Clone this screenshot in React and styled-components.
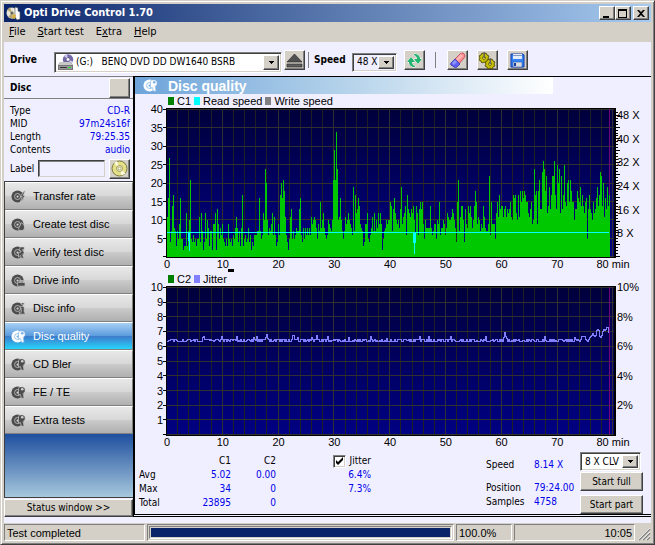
import React, { useState } from 'react';
import styled, { createGlobalStyle, css } from 'styled-components';

const UI_FONT = '"DejaVu Sans Condensed", "DejaVu Sans", sans-serif';
const ARIAL = '"Liberation Sans", Arial, sans-serif';

const GlobalStyle = createGlobalStyle`
  * {
    box-sizing: border-box;
  }

  body {
    margin: 0;
    background: #d4d0c8;
  }

  button, input, select {
    font: inherit;
    color: inherit;
    margin: 0;
  }
`;

const raised = css`
  border: 1px solid;
  border-color: #fff #404040 #404040 #fff;
  box-shadow: inset -1px -1px 0 #808080;
  background: #d4d0c8;
`;

const sunken = css`
  border: 1px solid;
  border-color: #808080 #fff #fff #808080;
`;

const Window = styled.div`
  display: flex;
  flex-direction: column;
  min-height: 100vh;
  border: 1px solid;
  border-color: #d4d0c8 #404040 #404040 #d4d0c8;
  box-shadow: inset 1px 1px 0 #fff, inset -1px -1px 0 #808080;
  padding: 3px;
  background: #d4d0c8;
  font-family: ${UI_FONT};
  font-size: 10px;
  line-height: 14px;
  color: #000;
`;

const TitleBar = styled.header`
  display: flex;
  align-items: center;
  height: 18px;
  padding: 0 2px;
  gap: 3px;
  background: linear-gradient(to right, #0a246a, #a6caf0);
`;

const Title = styled.h1`
  flex: 1;
  margin: 0;
  font-size: 11px;
  font-weight: bold;
  color: #fff;
`;

const WindowButtons = styled.div`
  display: flex;
`;

const WindowButton = styled.button`
  ${raised}
  display: flex;
  align-items: center;
  justify-content: center;
  width: 16px;
  height: 14px;
  padding: 0;
  margin-left: ${props => (props.$apart ? '2px' : 0)};
`;

const MenuBar = styled.nav`
  display: flex;
  align-items: center;
  height: 20px;
  padding: 0 5px;
  gap: 12px;
`;

const MenuItem = styled.button`
  border: 0;
  padding: 0;
  background: none;
  font-size: 11px;
`;

const Client = styled.div`
  flex: 1;
  display: flex;
  flex-direction: column;
  padding-bottom: 6px;
  background: #f0efff;
`;

const Toolbar = styled.div`
  display: flex;
  align-items: center;
  height: 34px;
  padding: 2px 6px 0;
`;

const ToolLabel = styled.label`
  width: ${props => props.$width}px;
  font-weight: bold;
`;

const ToolButton = styled.button`
  ${raised}
  display: flex;
  align-items: center;
  justify-content: center;
  width: 21px;
  height: 20px;
  padding: 0;
  margin-right: ${props => props.$gap || 0}px;
`;

const Separator = styled.span`
  width: 1px;
  height: 16px;
  margin-right: ${props => props.$gap}px;
  background: #808080;
`;

const ComboBox = styled.div`
  display: flex;
  align-items: center;
  width: ${props => props.$width}px;
  height: ${props => props.$height || 19}px;
  margin-top: ${props => props.$top || 0}px;
  margin-right: ${props => props.$gap || 0}px;
  border: 1px solid;
  border-color: #808080 #fff #fff #808080;
  box-shadow: inset 1px 1px 0 #404040, inset -1px -1px 0 #d4d0c8;
  padding: 2px;
  background: ${props => props.$fill || '#fff'};

  select {
    flex: 1;
    min-width: 0;
    appearance: none;
    border: 0;
    padding: 0 0 0 2px;
    background: none;
    line-height: 14px;
  }
`;

const ComboArrow = styled.span`
  ${raised}
  display: flex;
  align-items: center;
  justify-content: center;
  align-self: stretch;
  width: 16px;
  pointer-events: none;
`;

const Body = styled.div`
  flex: 1;
  display: flex;
`;

const Sidebar = styled.aside`
  display: flex;
  flex-direction: column;
  width: 129px;
  border-top: 1px solid #808080;
`;

const DiscHeader = styled.div`
  display: flex;
  align-items: center;
  justify-content: space-between;
  height: 22px;
  padding: 0 3px 0 6px;
  border-bottom: 1px solid #808080;
  font-weight: bold;
`;

const DiscFacts = styled.dl`
  display: grid;
  grid-template-columns: auto auto;
  justify-content: space-between;
  margin: 0;
  padding: 5px 3px 0 6px;
  line-height: 13px;

  dd {
    margin: 0;
    text-align: right;
    color: #0000e8;
  }
`;

const LabelRow = styled.div`
  display: flex;
  align-items: center;
  height: 25px;
  padding: 0 3px 0 6px;
`;

const LabelInput = styled.input`
  ${sunken}
  width: 67px;
  height: 17px;
  margin-left: auto;
  margin-right: 4px;
  padding: 0 2px;
  border-color: #404040 #d4d0c8 #d4d0c8 #404040;
  box-shadow: inset 1px 1px 0 #808080;
  background: #f0efff;
`;

const NavList = styled.div`
  flex: 1;
  display: flex;
  flex-direction: column;
  border: 1px solid #404040;
  border-right: 0;
  background: linear-gradient(to bottom, #1f4f9f 252px, #a6c8dc);
`;

const NavButton = styled.button`
  display: flex;
  align-items: center;
  height: 28px;
  padding: 0 0 0 6px;
  gap: 7px;
  border: 1px solid;
  border-width: 1px 1px 1px 0;
  border-color: #fff #808080 #808080 #fff;
  text-align: left;
  font-family: ${ARIAL};
  font-size: 11px;
  color: ${props => (props.$active ? '#fff' : '#000')};
  background: ${props =>
    props.$active
      ? 'linear-gradient(to bottom, #a8d0f4, #5a9adc 50%, #3c7ccc 52%, #28d4fc)'
      : 'linear-gradient(to bottom, #e8e8e8, #d8d8d8 48%, #cacaca 52%, #b0b0b0)'};
`;

const StatusWindowButton = styled.button`
  ${raised}
  height: 18px;
  margin-top: 1px;
  padding: 0;
`;

const Main = styled.main`
  flex: 1;
  min-width: 0;
  border-top: 1px solid #000;
  border-left: 2px solid #000;
  border-bottom: 3px double #000;
`;

const Banner = styled.div`
  display: flex;
  align-items: center;
  height: 17px;
  width: 81%;
  padding-left: 8px;
  gap: 10px;
  background: linear-gradient(to right, #6ea4da, #b4d2ea 50%, #fff);
`;

const BannerTitle = styled.h2`
  margin: 0;
  font-family: ${ARIAL};
  font-size: 14px;
  font-weight: bold;
  color: #fff;
`;

const ChartBlock = styled.section`
  padding: 0 35px 0 31px;
  font-family: ${ARIAL};
  font-size: 11px;
`;

const Legend = styled.div`
  display: flex;
  align-items: center;
  height: 14px;
  padding-left: 2px;
  gap: 3px;
`;

const Swatch = styled.i`
  width: 6px;
  height: 8px;
  background: ${props => props.$color};
`;

const PlotRow = styled.div`
  display: flex;
  height: 150px;
`;

const YAxis = styled.div`
  display: flex;
  flex-direction: column;
  justify-content: space-between;
  width: 0;
  padding: ${props => props.$top}px 0 1px;
  line-height: 0;
  white-space: nowrap;

  span {
    display: flex;
    align-items: center;
    height: 0;
  }
`;

const LeftAxis = styled(YAxis)`
  align-items: flex-end;

  span {
    padding-right: 3px;
  }
`;

const RightAxis = styled(YAxis)`
  span {
    padding-left: 1px;
  }
`;

const PlotSvg = styled.svg`
  display: block;
  flex: 1;
  min-width: 0;
  height: 150px;
  overflow: visible;
`;

const XAxis = styled.div`
  display: flex;
  justify-content: space-between;
  height: 11px;
  padding: 0 3px 0 1px;
  line-height: 12px;

  span {
    display: flex;
    justify-content: center;
    width: 0;
    white-space: nowrap;
  }
`;

const Gap = styled.div`
  padding-left: 62px;
`;

const Dash = styled.div`
  width: 6px;
  height: 3px;
  background: #000;
`;

const Results = styled.div`
  display: flex;
  align-items: flex-start;
  padding: 5px 8px 0 4px;
`;

const ResultTable = styled.table`
  border-collapse: collapse;
  margin-top: 2px;
  line-height: 14px;

  th, td {
    height: 14px;
    padding: 0;
    font-weight: normal;
    text-align: right;
  }

  tbody th {
    text-align: left;
  }

  td {
    color: #0000e8;
  }
`;

const Col = styled.col`
  width: ${props => props.$width}px;
`;

const CheckLabel = styled.label`
  display: flex;
  align-items: center;
  justify-content: flex-end;
  gap: 4px;
`;

const CheckBox = styled.input`
  appearance: none;
  width: 13px;
  height: 13px;
  border: 1px solid;
  border-color: #808080 #fff #fff #808080;
  box-shadow: inset 1px 1px 0 #404040, inset -1px -1px 0 #d4d0c8;
  background: #fff;

  &:checked {
    background: #fff url("data:image/svg+xml,%3Csvg xmlns='http://www.w3.org/2000/svg' viewBox='0 0 11 11'%3E%3Cpath d='M2 4v3l2 2 5-5V1L4 6z'/%3E%3C/svg%3E") center / 11px 11px;
  }
`;

const Readout = styled.dl`
  display: grid;
  grid-template-columns: 48px 38px;
  grid-template-rows: 23px 14px 14px;
  margin: 6px 8px 0 auto;

  dd {
    margin: 0;
    color: #0000e8;
  }
`;

const Actions = styled.div`
  display: flex;
  flex-direction: column;
  align-items: flex-start;
`;

const ActionButton = styled.button`
  ${raised}
  width: 63px;
  height: 19px;
  margin-top: ${props => props.$top}px;
  padding: 0;
`;

const StatusBar = styled.footer`
  display: flex;
  align-items: flex-end;
  gap: 2px;
  height: 18px;
  font-family: ${ARIAL};
  font-size: 11px;
`;

const StatusCell = styled.div`
  ${sunken}
  width: ${props => (props.$width ? `${props.$width}px` : 'auto')};
  flex: ${props => (props.$grow ? 1 : 'none')};
  height: 17px;
  padding: 0 2px;
  line-height: 16px;
  text-align: ${props => props.$align || 'left'};
`;

const ProgressCell = styled(StatusCell)`
  padding: 1px;
`;

const ProgressTrack = styled.div`
  ${sunken}
  height: 13px;
  padding: 1px;
`;

const ProgressFill = styled.div`
  height: 9px;
  background: #0a246a;
`;

// C1 errors, one sample per pixel column
const C1 = [
  11, 16, 27, 4, 7, 14, 17, 8, 7, 3, 7, 5, 9, 16, 5, 5, 2, 3, 3, 12, 3, 7, 10, 21, 5, 4, 6, 4, 5, 3,
  5, 5, 11, 4, 12, 7, 2, 4, 12, 5, 10, 8, 3, 7, 7, 2, 9, 9, 12, 2, 13, 9, 5, 8, 6, 9, 5, 4, 3, 5,
  3, 9, 5, 4, 5, 3, 6, 5, 8, 11, 8, 4, 7, 3, 8, 17, 3, 5, 6, 4, 5, 8, 4, 6, 2, 4, 3, 6, 6, 6,
  7, 7, 16, 7, 5, 6, 12, 10, 24, 20, 10, 6, 8, 7, 9, 12, 6, 11, 6, 3, 4, 9, 6, 17, 20, 16, 21, 18, 11, 6,
  4, 2, 5, 11, 13, 5, 7, 5, 6, 8, 7, 7, 13, 16, 6, 4, 8, 5, 8, 6, 8, 6, 8, 6, 11, 9, 10, 11, 10, 8,
  5, 9, 7, 15, 8, 10, 12, 8, 6, 5, 6, 10, 9, 8, 7, 10, 21, 29, 21, 34, 24, 10, 11, 16, 10, 7, 5, 7, 11, 9,
  10, 12, 10, 9, 8, 6, 19, 7, 17, 12, 13, 16, 14, 9, 8, 7, 3, 4, 9, 9, 12, 5, 4, 6, 8, 11, 7, 12, 7, 10,
  8, 12, 9, 12, 9, 2, 5, 7, 8, 10, 9, 10, 10,
  15, 14, 7, 13, 16, 12, 10, 9, 10, 8, 13, 19, 9, 11, 12, 14, 6, 17, 13, 12, 11, 13, 12, 14, 10, 5, 14, 12, 6, 13,
  15, 13, 15, 9, 5, 10, 8, 8, 8, 8, 14, 8, 6, 7, 9, 9, 5, 10, 9, 15, 6, 8, 8, 10, 9, 6, 8, 12, 11, 10,
  10, 11, 13, 12, 10, 8, 4, 15, 21, 7, 11, 14, 14, 10, 4, 13, 9, 8, 14, 12, 14, 11, 8, 10, 14, 18, 15, 9, 11, 10,
  7, 9, 8, 14, 11, 8, 7, 7, 9, 22, 6, 15, 9, 9, 9, 5, 12, 15, 11, 17, 13, 14, 14, 11, 13, 14, 11, 13, 12, 13,
  15, 11, 10, 17, 16, 17, 12, 10, 17, 11, 18, 15, 18, 16, 18, 17, 15, 15, 12, 11, 13, 15, 9, 10, 24, 17, 18, 9, 18, 21,
  13, 13, 23, 26, 24, 18, 22, 12, 14, 19, 13, 17, 22, 22, 26, 17, 13, 25, 20, 24, 12, 22, 13, 17, 25, 15, 14, 20, 21, 15,
  21, 18, 15, 15, 10, 13, 13, 18, 16, 15, 19, 14, 17, 14, 12, 15, 16, 5, 13, 17, 13, 12, 10, 15, 12, 13, 16, 19, 14, 17,
  23, 22, 14, 20, 11, 16, 13, 19, 14, 17,
];

const JITTER_SPIKES = {
  35: 4, 36: 5, 54: 5, 69: 5, 86: 4, 89: 5, 98: 4, 99: 7, 100: 3, 125: 6, 126: 6, 130: 4, 144: 4, 149: 6,
  160: 5, 181: 4, 203: 5, 219: 3, 252: 5, 261: 5, 283: 5, 318: 5, 336: 4, 337: 9, 338: 5, 339: 3,
  377: 5, 407: 4, 411: 5, 414: 4,
};

const JITTER_TAIL = [
  2, 1, 0, 2, 5, 5, 5, 5, 2, 1, 0, 2, 4, 5, 6, 8, 6, 5, 6, 11, 12, 11, 5, 4, 6, 10, 12, 11, 12, 14, 14, 9, 12,
];

const jitterPath = () => {
  let seed = 7;
  let d = 'M1 55.5';
  for (let x = 0; x < 442; x += 1) {
    seed = (seed * 1103 + 131) % 9973;
    const noise = [0, 2, 0, 2, 1, 0, 2][seed % 7];
    const tail = x - 410;
    const rise = tail >= 0 ? JITTER_TAIL[tail] : JITTER_SPIKES[x] || noise;
    d += `V${55.5 - rise}H${x + 2}`;
  }
  return d;
};

const JITTER_PATH = jitterPath();

const UNIT = 147 / 40;
const C1_PATH = `M1 149${C1.map((v, i) => `V${149 - Math.round(v * UNIT)}H${i + 2}`).join('')}V149Z`;

const range = (n) => Array.from({ length: n }, (_, i) => i);

const Plot = ({ id, rows, children, label }) => (
  <PlotSvg viewBox="0 0 450 150" preserveAspectRatio="none" shapeRendering="crispEdges" role="img" aria-label={label}>
    <defs>
      <linearGradient id={id} x1="0" y1="0" x2="0" y2="1">
        <stop offset="0" stopColor="#00003c" />
        <stop offset="1" stopColor="#000084" />
      </linearGradient>
    </defs>
    <rect width="450" height="150" fill="#000" />
    <rect x="1" y="1" width="447" height="148" fill={`url(#${id})`} />
    {range(41).map(i => (
      <rect key={i} x={Math.round(i * 11.16)} y="1" width="1" height="148" fill={i % 5 ? '#202024' : '#303030'} />
    ))}
    {range(rows + 1).map(i => (
      <g key={i}>
        <rect x="1" y={1 + Math.round((i * 147) / rows)} width="447" height="1" fill="#303030" />
        <rect x="-3" y={1 + Math.round((i * 147) / rows)} width="3" height="1" fill="#000" />
      </g>
    ))}
    <rect x="443" y="1" width="1" height="148" fill="#780078" />
    {children}
    <rect width="1" height="150" fill="#000" />
    <rect y="149" width="450" height="1" fill="#000" />
  </PlotSvg>
);

const Minutes = () => (
  <XAxis>
    {[0, 10, 20, 30, 40, 50, 60, 70, '80 min'].map(m => <span key={m}>{m}</span>)}
  </XAxis>
);

const Arrow = () => (
  <ComboArrow>
    <svg width="5" height="3" viewBox="0 0 5 3" shapeRendering="crispEdges"><path d="M0 0h5v1H4v1H3v1H2V2H1V1H0z" /></svg>
  </ComboArrow>
);

const MARKS = {
  bolt: <path d="M14 2l-4 6h2l-2 6 5-7h-2l2-5z" />,
  flame: <path d="M11 6c3 2 4 4 3 7-1 2-5 2-6 0 0-2 2-3 3-7z" />,
  check: <path d="M10 2h4v3h-2l2 3-2 2 2 4h-3l-1-3-2 2V9l3-2-2-2z" />,
  drive: <path d="M7 10h8v4H7zM9 8h5v1H9z" />,
  info: <path d="M11 2h3v2h-3zM10 6h4v6h1v2H9v-2h2V8h-1z" />,
  lens: <path d="M9 2h4l2 2v3l-2 2 1 5h-3l-1-4-2 1V4z" />,
};

const DiscIcon = ({ mark, light }) => {
  const ink = light ? '#fff' : '#4c4c4c';
  const gap = light ? '#7ab0e4' : '#d0d0d0';
  return (
    <svg width="15" height="15" viewBox="0 0 16 16" fill={ink}>
      <circle cx="7" cy="8" r="6.5" />
      <circle cx="7" cy="8" r="3.2" fill="none" stroke={gap} strokeWidth="0.8" />
      <circle cx="7" cy="8" r="1.2" fill={gap} />
      <g stroke={gap} strokeWidth="0.7">{MARKS[mark]}</g>
      {mark === 'lens' && <circle cx="12" cy="4.5" r="1.4" fill={gap} />}
    </svg>
  );
};

const NAV = [
  ['Transfer rate', 'bolt'],
  ['Create test disc', 'flame'],
  ['Verify test disc', 'check'],
  ['Drive info', 'drive'],
  ['Disc info', 'info'],
  ['Disc quality', 'lens'],
  ['CD Bler', 'lens'],
  ['FE / TE', 'lens'],
  ['Extra tests', 'lens'],
];

const AppIcon = () => (
  <svg width="15" height="15" viewBox="0 0 15 15">
    <circle cx="6" cy="7" r="5.5" fill="#e8e4d8" />
    <path d="M6 7L1 4l3-3zM6 7l1 6-5-2z" fill="#b8a878" />
    <circle cx="6" cy="7" r="1.6" fill="#665" />
    <path d="M9 1l3 1v3l2 1v7l-3 1-2-3z" fill="#fff" stroke="#555" strokeWidth="0.6" />
    <path d="M7 8l3 1-1 4-3-1z" fill="#d8b040" />
  </svg>
);

const DriveIcon = () => (
  <svg width="17" height="17" viewBox="0 0 17 17">
    <circle cx="11" cy="5.5" r="5.2" fill="#7268a8" />
    <path d="M11 5.5L7 2l3-1.700zM11 5.5l5 2-2 2.5z" fill="#d0c8ec" />
    <circle cx="11" cy="5.5" r="1.8" fill="#fff" stroke="#554c80" strokeWidth="0.6" />
    <path d="M3 8h10l3 3v5H1v-5z" fill="#777" />
    <path d="M3 8h10l3 3H1z" fill="#c8c8c8" />
    <path d="M2 12h13v3H2z" fill="#999" />
    <path d="M3 13h7v1H3z" fill="#333" />
    <path d="M11 13h3v1h-3z" fill="#20e030" />
  </svg>
);

const EjectIcon = () => (
  <svg width="17" height="15" viewBox="0 0 17 15">
    <path d="M8.5 1L16 9H1z" fill="#505050" stroke="#222" strokeWidth="0.6" />
    <path d="M1 11h15v3H1z" fill="#606060" stroke="#222" strokeWidth="0.6" />
  </svg>
);

const RefreshIcon = () => (
  <svg width="17" height="17" viewBox="0 0 17 17" fill="#24b470" stroke="#fff" strokeWidth="1" paintOrder="stroke">
    <path d="M5 5l4 5H6c0 2 1 3 3 4v1c-4 0-6-2-6-5H1z" />
    <path d="M12 12L8 7h3c0-2-1-3-3-4V2c4 0 6 2 6 5h2z" />
  </svg>
);

const EraserIcon = () => (
  <svg width="17" height="17" viewBox="0 0 17 17">
    <path d="M6 7l5-5q1-1 3-1 2 1 2 3 0 1-1 2l-5 6z" fill="#ff8c90" stroke="#c04858" strokeWidth="0.8" />
    <path d="M6 7l5 5-3 3q-1 1-3 0l-3-2q-1-1 0-2z" fill="#5c60f4" stroke="#3434b0" strokeWidth="0.8" />
    <path d="M7 7l5-5 2 2-5 5z" fill="#ffb4b4" />
    <path d="M3 11l3-3 2 2-3 3z" fill="#9094ff" />
  </svg>
);

const GearsIcon = () => (
  <svg width="17" height="17" viewBox="0 0 17 17">
    <g fill="#c8c000" stroke="#504c00" strokeWidth="0.9">
      <path d="M3 1l2 1 2-1 1 2 2 1-1 2 1 2-2 1-1 2-2-1-2 1-1-2-2-1 1-2-1-2 2-1z" />
      <path d="M9 7l2 1 2-1 1 2 2 1-1 2 1 2-2 1-1 2-2-1-2 1-1-2-2-1 1-2-1-2 2-1z" />
    </g>
    <circle cx="5" cy="6" r="1.5" fill="#e8e060" stroke="#504c00" strokeWidth="0.7" />
    <circle cx="11" cy="12" r="1.5" fill="#e8e060" stroke="#504c00" strokeWidth="0.7" />
    <path d="M4.5 0h1.400v6H4.5zM10.5 6h1.400v6h-1.400z" fill="#606060" />
  </svg>
);

const SaveIcon = () => (
  <svg width="17" height="17" viewBox="0 0 17 17">
    <path d="M2 2h12l1 1v12H2z" fill="#3484f4" stroke="#1038a8" />
    <path d="M4 2h9v5H4z" fill="#e4ecfc" />
    <path d="M4 3h9v1H4z" fill="#8098c8" />
    <path d="M4 10h9v5H4z" fill="#dcdcdc" stroke="#2858b8" strokeWidth="0.6" />
    <path d="M5 11h2v3H5z" fill="#1040a0" />
  </svg>
);

const YellowDiscIcon = () => (
  <svg width="17" height="17" viewBox="0 0 17 17">
    <circle cx="8.5" cy="8.5" r="7.5" fill="#e4e088" stroke="#7c7840" />
    <path d="M8.5 8.5L3 3l3-2zM8.5 8.5l6 5-4 2z" fill="#fffce0" />
    <circle cx="8.5" cy="8.5" r="3" fill="#f0ecb8" stroke="#8c8850" strokeWidth="0.8" />
    <circle cx="8.5" cy="8.5" r="1.3" fill="#fff" stroke="#8c8850" strokeWidth="0.6" />
  </svg>
);

const App = () => {
  const [page, setPage] = useState('Disc quality');
  const [showJitter, setShowJitter] = useState(true);

  return (
    <>
      <GlobalStyle />
      <Window>
        <TitleBar>
          <AppIcon />
          <Title>Opti Drive Control 1.70</Title>
          <WindowButtons>
            <WindowButton aria-label="Minimize">
              <svg width="10" height="9"><path d="M1 7h6v2H1z" /></svg>
            </WindowButton>
            <WindowButton aria-label="Maximize">
              <svg width="10" height="9" shapeRendering="crispEdges"><path d="M0 0h9v9H0zM1 2v6h7V2z" fillRule="evenodd" /></svg>
            </WindowButton>
            <WindowButton $apart aria-label="Close">
              <svg width="8" height="7" viewBox="0 0 8 7"><path d="M0 0h2l2 2 2-2h2L5 3.5 8 7H6L4 5 2 7H0l3-3.5z" /></svg>
            </WindowButton>
          </WindowButtons>
        </TitleBar>
        <MenuBar>
          <MenuItem><u>F</u>ile</MenuItem>
          <MenuItem><u>S</u>tart test</MenuItem>
          <MenuItem>E<u>x</u>tra</MenuItem>
          <MenuItem><u>H</u>elp</MenuItem>
        </MenuBar>
        <Client>
          <Toolbar>
            <ToolLabel htmlFor="drive" $width={44}>Drive</ToolLabel>
            <ComboBox $width={228} $height={21} $top={4} $gap={2}>
              <DriveIcon />
              <select id="drive">
                <option>{'(G:)\u00a0\u00a0\u00a0BENQ DVD DD DW1640 BSRB'}</option>
              </select>
              <Arrow />
            </ComboBox>
            <ToolButton aria-label="Eject" $gap={3}><EjectIcon /></ToolButton>
            <Separator $gap={5} />
            <ToolLabel htmlFor="speed" $width={38}>Speed</ToolLabel>
            <ComboBox $width={45} $top={4} $gap={7} $fill="#f0efff">
              <select id="speed"><option>48 X</option></select>
              <Arrow />
            </ComboBox>
            <ToolButton aria-label="Refresh" $gap={10}><RefreshIcon /></ToolButton>
            <Separator $gap={11} />
            <ToolButton aria-label="Erase" $gap={9}><EraserIcon /></ToolButton>
            <ToolButton aria-label="Settings" $gap={9}><GearsIcon /></ToolButton>
            <ToolButton aria-label="Save"><SaveIcon /></ToolButton>
          </Toolbar>
          <Body>
            <Sidebar>
              <DiscHeader>
                Disc
                <ToolButton aria-label="Disc details" />
              </DiscHeader>
              <DiscFacts>
                <dt>Type</dt><dd>CD-R</dd>
                <dt>MID</dt><dd>97m24s16f</dd>
                <dt>Length</dt><dd>79:25.35</dd>
                <dt>Contents</dt><dd>audio</dd>
              </DiscFacts>
              <LabelRow>
                <label htmlFor="disc-label">Label</label>
                <LabelInput id="disc-label" />
                <ToolButton aria-label="Read label"><YellowDiscIcon /></ToolButton>
              </LabelRow>
              <NavList>
                {NAV.map(([name, mark]) => (
                  <NavButton key={name} $active={page === name} onClick={() => setPage(name)}>
                    <DiscIcon mark={mark} light={page === name} />
                    {name}
                  </NavButton>
                ))}
              </NavList>
              <StatusWindowButton>Status window &gt;&gt;</StatusWindowButton>
            </Sidebar>
            <Main>
              <Banner>
                <DiscIcon mark="lens" light />
                <BannerTitle>{page}</BannerTitle>
              </Banner>
              <ChartBlock>
                <Legend>
                  <Swatch $color="#008000" /><span>C1</span>
                  <Swatch $color="#00ffff" /><span>Read speed</span>
                  <Swatch $color="#808080" /><span>Write speed</span>
                </Legend>
                <PlotRow>
                  <LeftAxis $top={1}>
                    {[40, 35, 30, 25, 20, 15, 10, 5, ''].map(v => <span key={v}>{v}</span>)}
                  </LeftAxis>
                  <Plot id="c1-fill" rows={8} label="C1 errors and read speed">
                    <path d={C1_PATH} fill="#00c800" />
                    <path d="M1 124h442v1H1zM22 124h1v9h-1zM23 124h1v19h-1zM247 124h3v11h-3zM248 135h1v11h-1z" fill="#00ffff" />
                    {range(50).map(i => (
                      <rect key={i} x="450" y={Math.round(148 - i * 2.94)} width={i % 4 ? 2 : 4} height="1" fill="#000" />
                    ))}
                  </Plot>
                  <RightAxis $top={7}>
                    {['48 X', '40 X', '32 X', '24 X', '16 X', '8 X', ''].map(v => <span key={v}>{v}</span>)}
                  </RightAxis>
                </PlotRow>
                <Minutes />
                <Gap><Dash /></Gap>
                <Legend>
                  <Swatch $color="#008000" /><span>C2</span>
                  <Swatch $color="#8080ff" /><span>Jitter</span>
                </Legend>
                <PlotRow>
                  <LeftAxis $top={1}>
                    {[10, 9, 8, 7, 6, 5, 4, 3, 2, 1, ''].map(v => <span key={v}>{v}</span>)}
                  </LeftAxis>
                  <Plot id="c2-fill" rows={10} label="C2 errors and jitter">
                    {showJitter && <path d={JITTER_PATH} fill="none" stroke="#8080ff" strokeWidth="1" />}
                  </Plot>
                  <RightAxis $top={1}>
                    {['10%', '8%', '6%', '4%', '2%', ''].map(v => <span key={v}>{v}</span>)}
                  </RightAxis>
                </PlotRow>
                <Minutes />
              </ChartBlock>
              <Results>
                <ResultTable>
                  <colgroup>
                    <Col $width={40} /><Col $width={52} /><Col $width={45} /><Col $width={95} />
                  </colgroup>
                  <thead>
                    <tr>
                      <td />
                      <th>C1</th>
                      <th>C2</th>
                      <th>
                        <CheckLabel>
                          <CheckBox type="checkbox" checked={showJitter} onChange={e => setShowJitter(e.target.checked)} />
                          Jitter
                        </CheckLabel>
                      </th>
                    </tr>
                  </thead>
                  <tbody>
                    <tr><th>Avg</th><td>5.02</td><td>0.00</td><td>6.4%</td></tr>
                    <tr><th>Max</th><td>34</td><td>0</td><td>7.3%</td></tr>
                    <tr><th>Total</th><td>23895</td><td>0</td><td /></tr>
                  </tbody>
                </ResultTable>
                <Readout>
                  <dt>Speed</dt><dd>8.14 X</dd>
                  <dt>Position</dt><dd>79:24.00</dd>
                  <dt>Samples</dt><dd>4758</dd>
                </Readout>
                <Actions>
                  <ComboBox $width={61}>
                    <select aria-label="Test speed"><option>8 X CLV</option></select>
                    <Arrow />
                  </ComboBox>
                  <ActionButton $top={1}>Start full</ActionButton>
                  <ActionButton $top={4}>Start part</ActionButton>
                </Actions>
              </Results>
            </Main>
          </Body>
        </Client>
        <StatusBar>
          <StatusCell $width={141}>Test completed</StatusCell>
          <ProgressCell $grow>
            <ProgressTrack><ProgressFill style={{ width: '100%' }} /></ProgressTrack>
          </ProgressCell>
          <StatusCell $width={56}>100.0%</StatusCell>
          <StatusCell $width={121} $align="right">10:05</StatusCell>
          <svg width="14" height="14" viewBox="0 0 14 14" stroke="#808080" strokeWidth="1.5">
            <path d="M2 13L13 2M6 13l7-7M10 13l3-3" />
            <path d="M1 13L13 1M5 13l8-8M9 13l4-4" stroke="#fff" strokeWidth="0.7" />
          </svg>
        </StatusBar>
      </Window>
    </>
  );
};

export default App;
